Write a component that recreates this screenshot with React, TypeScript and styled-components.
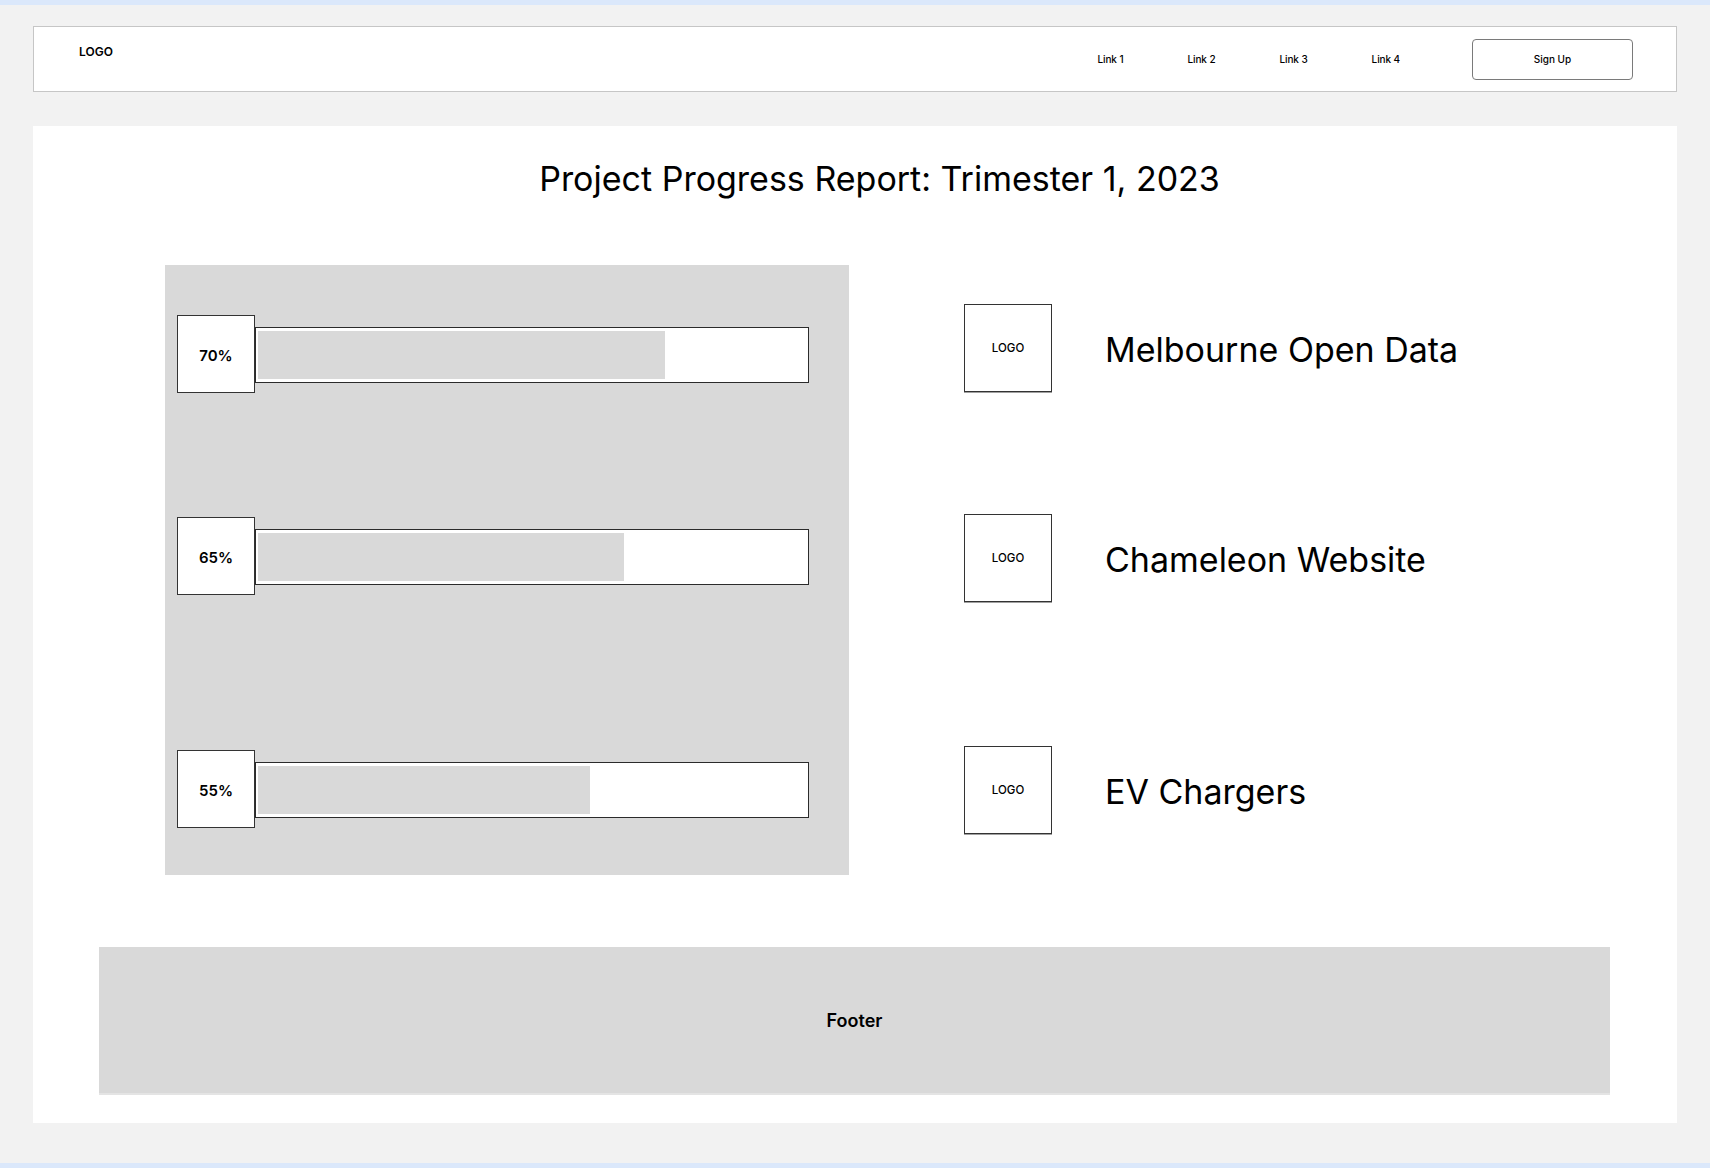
import React from "react";
import styled, { createGlobalStyle } from "styled-components";

const GlobalStyle = createGlobalStyle`
    * {
        box-sizing: border-box;
    }

    body {
        margin: 0;
        font-family: Inter, "Noto Sans", "Liberation Sans", sans-serif;
        color: #000;
        background: #f2f2f2;
    }
`;

const links = ["Link 1", "Link 2", "Link 3", "Link 4"];

const progress = [
    { label: "70%", fill: 407, offset: 50 },
    { label: "65%", fill: 366, offset: 124 },
    { label: "55%", fill: 332, offset: 155 },
];

const projects = [
    { name: "Melbourne Open Data", offset: 39 },
    { name: "Chameleon Website", offset: 122 },
    { name: "EV Chargers", offset: 144 },
];

export default function App() {
    return (
        <>
            <GlobalStyle />
            <Page>
                <Nav>
                    <NavLogo>LOGO</NavLogo>
                    <NavLinks>
                        {links.map((link) => (
                            <NavLink key={link}>{link}</NavLink>
                        ))}
                    </NavLinks>
                    <SignUp>Sign Up</SignUp>
                </Nav>

                <Main>
                    <Title>Project Progress Report: Trimester 1, 2023</Title>

                    <Content>
                        <ProgressPanel>
                            {progress.map((item) => (
                                <ProgressRow key={item.label} $offset={item.offset}>
                                    <Percent>{item.label}</Percent>
                                    <Bar>
                                        <Fill style={{ width: item.fill }} />
                                    </Bar>
                                </ProgressRow>
                            ))}
                        </ProgressPanel>

                        <ProjectList>
                            {projects.map((project) => (
                                <Project key={project.name} $offset={project.offset}>
                                    <ProjectLogo>LOGO</ProjectLogo>
                                    <ProjectName>{project.name}</ProjectName>
                                </Project>
                            ))}
                        </ProjectList>
                    </Content>

                    <Footer>Footer</Footer>
                </Main>
            </Page>
        </>
    );
}

const Page = styled.div`
    min-height: 1168px;
    padding: 21px 33px 40px 33px;

    background: #f2f2f2;
    border-top: 5px solid #dbe8fb;
    border-bottom: 5px solid #dbe8fb;
`;

const Nav = styled.header`
    height: 66px;

    display: flex;
    align-items: center;

    padding: 0 43px 0 45px;

    background: #fff;
    border: 1px solid #c6c6c6;
`;

const NavLogo = styled.div`
    align-self: flex-start;
    margin-top: 18px;

    font-size: 12px;
    font-weight: 600;
    line-height: 14px;
`;

const NavLinks = styled.nav`
    margin-left: auto;

    display: flex;
    gap: 64px;
`;

const NavLink = styled.a`
    font-size: 10px;
    font-weight: 500;
    line-height: 12px;
    letter-spacing: -0.1px;
    color: #000;
`;

const SignUp = styled.button`
    width: 161px;
    height: 41px;
    margin-left: 72px;

    font-family: inherit;
    font-size: 10px;
    font-weight: 500;
    color: #000;

    background: #fff;
    border: 1px solid #7a7a7a;
    border-radius: 4px;
`;

const Main = styled.main`
    height: 997px;
    margin-top: 34px;

    display: flex;
    flex-direction: column;

    padding: 33px 67px 28px 66px;

    background: #fff;
`;

const Title = styled.h1`
    margin: 0 0 0 50px;

    font-size: 34px;
    font-weight: 400;
    line-height: 40px;
    text-align: center;
`;

const Content = styled.section`
    display: flex;
    gap: 115px;

    margin-top: 66px;
    padding-left: 66px;
`;

const ProgressPanel = styled.div`
    width: 684px;
    height: 610px;

    display: flex;
    flex-direction: column;

    padding: 0 40px 0 12px;

    background: #d9d9d9;
`;

const ProgressRow = styled.div<{ $offset: number }>`
    display: flex;
    align-items: center;

    margin-top: ${({ $offset }) => $offset}px;
`;

const Percent = styled.div`
    width: 78px;
    height: 78px;

    display: flex;
    align-items: center;
    justify-content: center;
    padding-top: 3px;

    font-size: 15px;
    font-weight: 600;

    background: #fff;
    border: 1px solid #333;
`;

const Bar = styled.div`
    flex: 1;
    height: 56px;
    margin-top: 2px;

    padding: 3px 2px;

    background: #fff;
    border: 1.5px solid #2b2b2b;
`;

const Fill = styled.div`
    height: 100%;
    background: #d9d9d9;
`;

const ProjectList = styled.div`
    display: flex;
    flex-direction: column;
`;

const Project = styled.div<{ $offset: number }>`
    display: flex;
    align-items: center;
    gap: 53px;

    margin-top: ${({ $offset }) => $offset}px;
`;

const ProjectLogo = styled.div`
    width: 88px;
    height: 88px;

    display: flex;
    align-items: center;
    justify-content: center;

    font-size: 11.5px;
    font-weight: 500;

    background: #fff;
    border: 1px solid #333;
    box-shadow: 0 1px 0 #a0a0a0;
`;

const ProjectName = styled.div`
    padding-top: 4px;

    font-size: 34px;
    font-weight: 400;
    line-height: 40px;
`;

const Footer = styled.footer`
    height: 148px;
    margin-top: auto;

    display: flex;
    align-items: center;
    justify-content: center;

    font-size: 18px;
    font-weight: 600;

    background: #d9d9d9;
    border-bottom: 2px solid #e4e4e4;
`;
